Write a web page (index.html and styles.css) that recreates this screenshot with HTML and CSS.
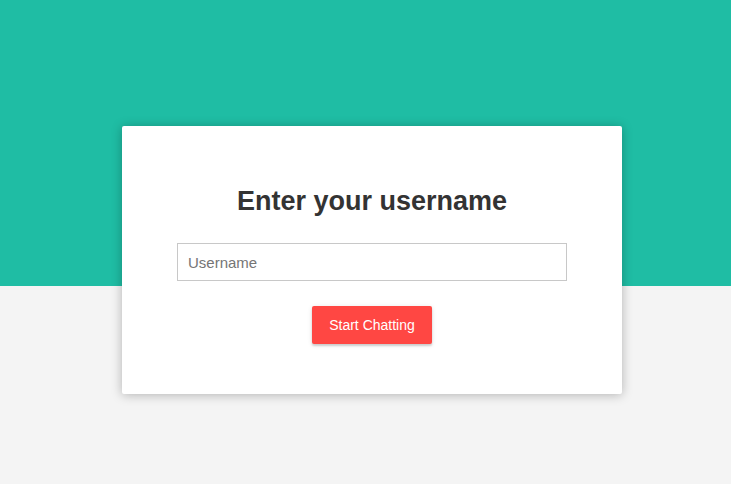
FILE: index.html
```
<!DOCTYPE html>
<html>
<head>
<meta charset="utf-8">
<link rel="stylesheet" href="styles.css">
</head>
<body>
<div class="page">
  <div class="card">
    <h1 class="title">Enter your username</h1>
    <form class="form">
      <input class="field" type="text" placeholder="Username">
      <button class="submit" type="button">Start Chatting</button>
    </form>
  </div>
</div>
</body>
</html>
```
FILE: styles.css
```
html, body {
  margin: 0;
  padding: 0;
}
body {
  font-family: "Liberation Sans", Arial, sans-serif;
  background: linear-gradient(#1fbda4 0, #1fbda4 286px, #f4f4f4 286px, #f4f4f4 100%);
  min-height: 484px;
}
.page {
  display: flex;
  justify-content: center;
  padding-top: 126px;
  padding-left: 13px;
}
.card {
  box-sizing: border-box;
  width: 500px;
  height: 268px;
  background: #fff;
  border-radius: 2px;
  box-shadow: 0 1px 11px rgba(0, 0, 0, 0.27);
  padding: 60px 55px 50px;
  display: flex;
  flex-direction: column;
}
.title {
  margin: 0;
  font-size: 27px;
  line-height: 30px;
  font-weight: bold;
  color: #333;
  text-align: center;
}
.form {
  margin-top: 27px;
  display: flex;
  flex-direction: column;
  align-items: center;
  gap: 25px;
}
.field {
  box-sizing: border-box;
  width: 100%;
  height: 38px;
  border: 1px solid #c8c8c8;
  border-radius: 0;
  padding: 0 10px;
  font-family: "Liberation Sans", Arial, sans-serif;
  font-size: 15px;
  color: #333;
  outline: none;
}
.field::placeholder {
  color: #757575;
}
.submit {
  width: 120px;
  height: 38px;
  border: none;
  border-radius: 2px;
  background: #ff4743;
  color: #fff;
  font-family: "Liberation Sans", Arial, sans-serif;
  font-size: 14px;
  padding: 0 15px;
  box-shadow: 0 2px 2px 0 rgba(0, 0, 0, 0.14), 0 1px 5px 0 rgba(0, 0, 0, 0.12);
  cursor: pointer;
}
```
